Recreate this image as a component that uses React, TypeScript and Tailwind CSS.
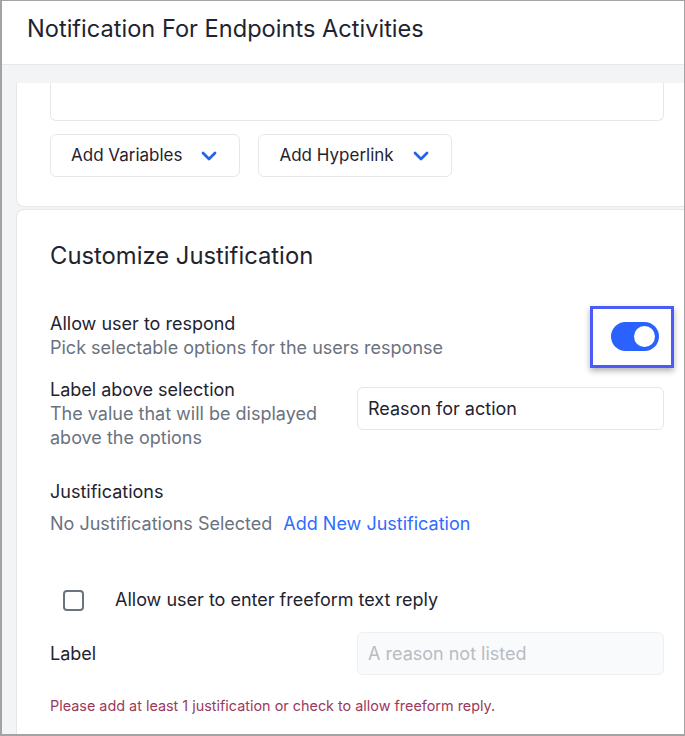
import React from 'react'

function Chevron() {
  return (
    <svg width="16" height="10" viewBox="0 0 16 10" fill="none" className="text-[#2563eb]">
      <path d="M2 2l6 6 6-6" stroke="currentColor" strokeWidth="2.8" strokeLinecap="round" strokeLinejoin="round" />
    </svg>
  )
}

function DropButton({ label }: { label: string }) {
  return (
    <button className="flex h-[43px] items-center gap-[19px] rounded-md border border-[#e5e7eb] bg-white pl-[20px] pr-[22px] text-[17px] text-[#1f2330]">
      <span>{label}</span>
      <Chevron />
    </button>
  )
}

export default function App() {
  return (
    <div
      className="flex h-[736px] w-[685px] flex-col overflow-hidden border-b-2 border-l-2 border-r border-t border-[#a3a3a3] bg-[#f3f4f6] text-[#1f2330]"
      style={{ fontFamily: 'Inter, "Noto Sans", sans-serif' }}
    >
      {/* header */}
      <div className="h-[64px] shrink-0 border-b border-[#e5e7eb] bg-white pl-[25px] pt-[14px]">
        <h1 className="text-[23.6px] font-normal leading-7">Notification For Endpoints Activities</h1>
      </div>

      <div className="flex flex-1 flex-col gap-[2px] pl-[14px] pt-[18px]">
        {/* message card (scrolled) */}
        <div className="rounded-bl-lg border-b border-l border-[#e5e7eb] bg-white pb-[29px] pl-[33px] pr-[20px]">
          <div className="h-[38px] rounded-b-md border-x border-b border-[#e5e7eb]" />
          <div className="mt-[13px] flex gap-[18px]">
            <DropButton label="Add Variables" />
            <DropButton label="Add Hyperlink" />
          </div>
        </div>

        {/* justification card */}
        <div className="flex-1 rounded-tl-lg border-l border-t border-[#e5e7eb] bg-white pl-[33px] pr-[20px] pt-[32px]">
          <h2 className="text-[23.8px] font-normal leading-7">Customize Justification</h2>

          <div className="mt-[42px] flex items-center justify-between">
            <div className="text-[18px] leading-6">
              <div>Allow user to respond</div>
              <div className="text-[#6b7280]">Pick selectable options for the users response</div>
            </div>
            <div className="relative mr-[5px]">
              <div className="flex h-[29px] w-[48px] items-center justify-end rounded-full bg-[#2962ff] pr-[4px]">
                <div className="h-[21px] w-[21px] rounded-full bg-white" />
              </div>
              <div className="pointer-events-none absolute -bottom-[17px] -left-[21px] -right-[15px] -top-[16px] border-[3px] border-[#4a5cf5] shadow-[0_3px_6px_rgba(0,0,0,0.3)]" />
            </div>
          </div>

          <div className="mt-[18px] flex">
            <div className="w-[307px] text-[18px] leading-6">
              <div>Label above selection</div>
              <div className="text-[#6b7280]">
                The value that will be displayed
                <br />
                above the options
              </div>
            </div>
            <div className="mt-[9px] flex h-[43px] flex-1 items-center rounded-md border border-[#e5e7eb] px-[10px] text-[18px]">
              Reason for action
            </div>
          </div>

          <div className="mt-[30px] text-[18px] leading-6">Justifications</div>
          <div className="mt-[8px] flex gap-[11px] text-[18px] leading-6">
            <span className="text-[#6b7280]">No Justifications Selected</span>
            <span className="text-[#2f6bff]">Add New Justification</span>
          </div>

          <div className="mt-[52px] flex items-center gap-[31px] pl-[13px]">
            <div className="h-[21px] w-[21px] rounded-[4px] border-2 border-[#6b7280]" />
            <span className="text-[18px] leading-6">Allow user to enter freeform text reply</span>
          </div>

          <div className="mt-[20px] flex items-center">
            <div className="w-[307px] text-[18px]">Label</div>
            <div className="flex h-[43px] flex-1 items-center rounded-md border border-[#eeeff1] bg-[#f9fafb] px-[10px] text-[18px] text-[#b8bcc4]">
              A reason not listed
            </div>
          </div>

          <div className="mt-[21px] text-[14.4px] leading-5 text-[#9b3a5c]">
            Please add at least 1 justification or check to allow freeform reply.
          </div>
        </div>
      </div>
    </div>
  )
}
